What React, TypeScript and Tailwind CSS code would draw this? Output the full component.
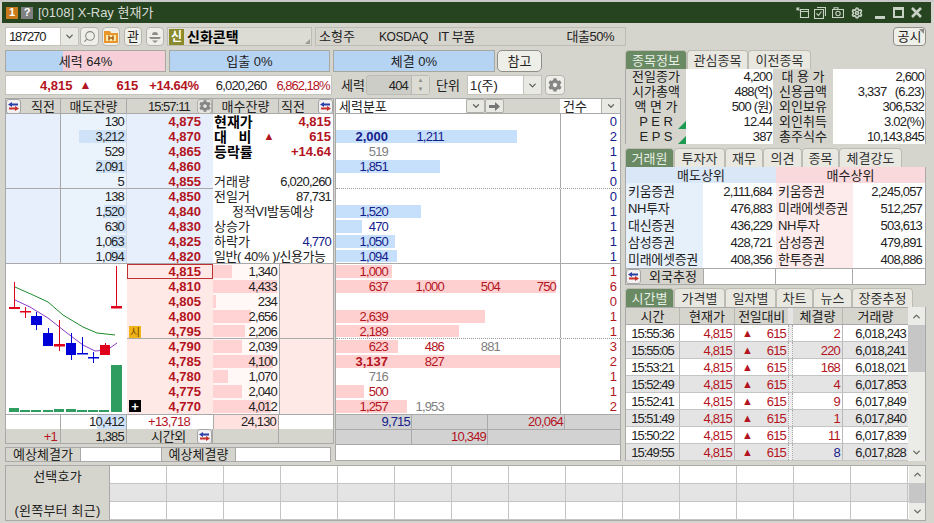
import { ChevronDown, ChevronUp, Search, Settings } from 'lucide-react'
import { FaCog } from 'react-icons/fa'
import type { ReactNode } from 'react'

const FONT = "font-['Liberation_Sans','Noto_Sans_CJK_KR',sans-serif]"
const RED = 'text-[#b3141e]'
const BLUE = 'text-[#14208c]'
const LINE = 'border-[#a9a9a9]'
const NUM = 'tracking-[-0.8px]'
const CLOCK = 'tracking-[-1px]'

type Ask = { qty: string; bar: number }

const ASKS: Ask[] = [
  { qty: '130', bar: 0 },
  { qty: '3,212', bar: 47 },
  { qty: '529', bar: 0 },
  { qty: '2,091', bar: 30 },
  { qty: '5', bar: 0 },
  { qty: '138', bar: 0 },
  { qty: '1,520', bar: 22 },
  { qty: '630', bar: 9 },
  { qty: '1,063', bar: 15 },
  { qty: '1,094', bar: 16 },
]
const ASK_PRICES = ['4,875', '4,870', '4,865', '4,860', '4,855', '4,850', '4,840', '4,830', '4,825', '4,820']

const BIDS = [
  { price: '4,815', qty: '1,340', bar: 19 },
  { price: '4,810', qty: '4,433', bar: 64 },
  { price: '4,805', qty: '234', bar: 3 },
  { price: '4,800', qty: '2,656', bar: 38 },
  { price: '4,795', qty: '2,206', bar: 32 },
  { price: '4,790', qty: '2,039', bar: 29 },
  { price: '4,785', qty: '4,100', bar: 60 },
  { price: '4,780', qty: '1,070', bar: 15 },
  { price: '4,775', qty: '2,040', bar: 29 },
  { price: '4,770', qty: '4,012', bar: 58 },
]

type Flow = { bar: number; v: [string, string][]; count: string }

const FLOWS: Flow[] = [
  { bar: 0, v: [], count: '0' },
  { bar: 181, v: [['2,000', 'b'], ['1,211', 'n']], count: '2' },
  { bar: 0, v: [['519', 'g']], count: '1' },
  { bar: 104, v: [['1,851', 'n']], count: '1' },
  { bar: 0, v: [], count: '0' },
  { bar: 0, v: [], count: '0' },
  { bar: 85, v: [['1,520', 'n']], count: '1' },
  { bar: 26, v: [['470', 'n']], count: '1' },
  { bar: 59, v: [['1,050', 'n']], count: '1' },
  { bar: 61, v: [['1,094', 'n']], count: '1' },
  { bar: 56, v: [['1,000', 'n']], count: '1' },
  { bar: 220, v: [['637', 'n'], ['1,000', 'n'], ['504', 'n'], ['750', 'n']], count: '6' },
  { bar: 0, v: [], count: '0' },
  { bar: 149, v: [['2,639', 'n']], count: '1' },
  { bar: 123, v: [['2,189', 'n']], count: '1' },
  { bar: 62, v: [['623', 'n'], ['486', 'n'], ['881', 'g']], count: '3' },
  { bar: 224, v: [['3,137', 'b'], ['827', 'n']], count: '2' },
  { bar: 0, v: [['716', 'g']], count: '1' },
  { bar: 28, v: [['500', 'n']], count: '1' },
  { bar: 71, v: [['1,257', 'n'], ['1,953', 'g']], count: '2' },
]

const BROKERS = [
  ['키움증권', '2,111,684', '키움증권', '2,245,057'],
  ['NH투자', '476,883', '미래에셋증권', '512,257'],
  ['대신증권', '436,229', 'NH투자', '503,613'],
  ['삼성증권', '428,721', '삼성증권', '479,891'],
  ['미래에셋증권', '408,356', '한투증권', '408,886'],
]

const TICKS = [
  ['15:55:36', '2', '6,018,243', 'r'],
  ['15:55:05', '220', '6,018,241', 'r'],
  ['15:53:21', '168', '6,018,021', 'r'],
  ['15:52:49', '4', '6,017,853', 'r'],
  ['15:52:41', '9', '6,017,849', 'r'],
  ['15:51:49', '1', '6,017,840', 'r'],
  ['15:50:22', '11', '6,017,839', 'r'],
  ['15:49:55', '8', '6,017,828', 'b'],
]

const STOCK_INFO = [
  ['전일종가', '4,200', '대 용 가', '2,600'],
  ['시가총액', '488(억)', '신용금액', '3,337   (6.23)'],
  ['액 면 가', '500 (원)', '외인보유', '306,532'],
  ['P E R', '12.44', '외인취득', '3.02(%)'],
  ['E P S', '387', '총주식수', '10,143,845'],
]

function Swap() {
  return (
    <span className="flex h-[15px] w-[15px] shrink-0 items-center justify-center rounded-[3px] border border-[#a5a5a5] bg-[#f2f2f2]">
      <svg width="13" height="11" viewBox="0 0 13 11">
        <path d="M5 1 1 3.5 5 6V4.5h6v-2H5z" fill="#2c3fa8" />
        <path d="M8 5l4 2.5L8 10V8.5H2v-2h6z" fill="#c8322c" />
      </svg>
    </span>
  )
}

function IconBtn({ children, className = '' }: { children: ReactNode; className?: string }) {
  return (
    <span className={`flex h-[19px] shrink-0 items-center justify-center rounded-[4px] border border-[#b5b5ad] bg-[#efefe9] ${className}`}>
      {children}
    </span>
  )
}

function Gear() {
  return (
    <span className="flex h-[15px] w-[15px] items-center justify-center rounded-[3px] border border-[#b0b0a8] bg-[#e4e4de]">
      <FaCog size={12} className="text-[#868686]" />
    </span>
  )
}

function TitleBar() {
  return (
    <div className="flex h-[21px] items-center bg-[#274421] pl-[4px] pr-[9px]">
      <span className="flex h-[12px] w-[12px] items-center justify-center bg-[#c97a1c] text-[11px] font-bold text-white">1</span>
      <span className="ml-[3px] flex h-[12px] w-[12px] items-center justify-center bg-[#808080] text-[11px] font-bold text-white">?</span>
      <span className="ml-[5px] text-[13px] text-[#d8dcd6]">[0108] X-Ray 현재가</span>
      <div className="ml-auto flex items-center">
        <svg width="13" height="11" viewBox="0 0 13 11" fill="none" stroke="#c8d2c4" strokeWidth="1.1">
          <path d="M4.5 2.5h8v8h-8zM4.5 4.5h8" />
          <path d="M1 1l2.5 2.5M.5 1h3M1 .5v3" />
        </svg>
        <svg className="ml-[5px]" width="12" height="12" viewBox="0 0 12 12" fill="none" stroke="#c8d2c4" strokeWidth="1.1">
          <path d="M3 .5h8.5V9M.5 2.5h9v9h-9z" />
          <path d="M2.5 6.5l2 2 3-4" />
        </svg>
        <svg className="ml-[6px]" width="12" height="11" viewBox="0 0 12 11" fill="none" stroke="#c8d2c4" strokeWidth="1.1">
          <path d="M.5 2.5h11v8H.5zM2 2.5V.8h4v1.7" />
          <circle cx="6" cy="6.5" r="2.2" />
        </svg>
        <Settings size={12} strokeWidth={3.2} className="ml-[7px] text-[#c8d2c4]" />
        <span className="ml-[12px] mt-[9px] h-[3px] w-[10px] bg-[#c8d2c4]" />
        <span className="ml-[8px] h-[11px] w-[11px] border-2 border-t-[3px] border-[#c8d2c4]" />
        <svg className="ml-[7px]" width="11" height="11" viewBox="0 0 11 11" stroke="#c8d2c4" strokeWidth="2.6">
          <path d="M1 1l9 9M10 1 1 10" />
        </svg>
      </div>
    </div>
  )
}

function Toolbar() {
  return (
    <div className="flex h-[19px] items-stretch">
      <div className="flex w-[56px] items-center border border-[#c4c4bc] bg-white pl-[3px] tracking-[-1.2px]">187270</div>
      <span className="flex w-[18px] items-center justify-center border-y border-r border-[#c4c4bc] bg-[#e9e9e3]">
        <ChevronDown size={11} strokeWidth={2.5} className="text-[#555]" />
      </span>
      <IconBtn className="ml-[1px] w-[19px]">
        <Search size={13} strokeWidth={2} className="-scale-x-100 text-[#8a8a82]" />
      </IconBtn>
      <IconBtn className="ml-[3px] w-[18px]">
        <svg width="14" height="13" viewBox="0 0 14 13">
          <path d="M0 1h6l1 2h7v10H0z" fill="#e9952a" />
          <path d="M2 5h10v6H2z" fill="#fbe9a8" />
          <path d="M5 5.5v5M9 5.5v5M5 8h4" stroke="#a85a12" strokeWidth="1.4" />
        </svg>
      </IconBtn>
      <IconBtn className="ml-[4px] w-[18px]">관</IconBtn>
      <IconBtn className="ml-[4px] w-[18px]">
        <svg width="14" height="14" viewBox="0 0 14 14" fill="#8d8d85">
          <path d="M4 5a3 3 0 0 1 6 0z" />
          <path d="M1 7h12l-1.5 2h-9z" />
          <path d="M4 10.5h6L7 13z" />
        </svg>
      </IconBtn>
      <div className="relative ml-[3px] flex w-[145px] items-center border border-[#bcbcb4] bg-[#dcdcd4] pl-[1px]">
        <span className="flex h-[16px] w-[15px] items-center justify-center bg-[#8a8a2a] text-[12px] font-bold text-white">신</span>
        <span className="ml-[3px] text-[14px] font-bold text-black">신화콘택</span>
        <svg className="absolute bottom-[1px] right-[1px]" width="5" height="5" viewBox="0 0 5 5"><path d="M5 0v5H0z" fill="#9a9a92" /></svg>
      </div>
      <div className="ml-[3px] flex w-[311px] items-center border border-[#bcbcb4] pl-[3px]">
        <span className="w-[60px]">소형주</span>
        <span className="w-[59px] text-[12px] tracking-[-0.4px]">KOSDAQ</span>
        <span className="tracking-[-0.4px]">IT 부품</span>
        <span className="ml-auto pr-[11px] tracking-[-0.5px]">대출50%</span>
      </div>
      <span className="relative ml-auto mr-[3px] flex w-[33px] items-center justify-center rounded-[4px] border border-[#8f8f87] bg-[#efefe9]">
        공시
        <svg className="absolute right-[1px] top-[1px]" width="5" height="5" viewBox="0 0 5 5"><path d="M0 0h5v5z" fill="#8a8a82" /></svg>
      </span>
    </div>
  )
}

function Meters() {
  return (
    <div className="flex h-[22px] items-stretch">
      <div className="flex w-[161px] items-center justify-center border border-[#a8a8a0] bg-[linear-gradient(90deg,#b5d3f2_36%,#f6cfd8_36%)]">세력 64%</div>
      <div className="ml-[3px] flex w-[161px] items-center justify-center border border-[#a8a8a0] bg-[#b5d3f2]">입출 0%</div>
      <div className="ml-[3px] flex w-[162px] items-center justify-center border border-[#a8a8a0] bg-[#b5d3f2]">체결 0%</div>
      <span className="ml-[2px] flex w-[45px] items-center justify-center rounded-[5px] border border-[#8f8f87] bg-[#efefe9]">참고</span>
    </div>
  )
}

function Quote() {
  return (
    <div className="flex h-[20px] items-stretch">
      <div className="flex w-[327px] items-center overflow-hidden whitespace-nowrap border border-[#c4c4bc] bg-white font-bold">
        <span className={`ml-[34px] ${RED}`}>4,815</span>
        <span className={`ml-[7px] text-[12px] ${RED}`}>▲</span>
        <span className={`ml-[25px] ${RED}`}>615</span>
        <span className={`ml-[11px] tracking-[-0.3px] ${RED}`}>+14.64%</span>
        <span className={`ml-[17px] font-normal text-[#222] ${NUM}`}>6,020,260</span>
        <span className={`ml-[10px] font-normal tracking-[-1px] ${RED}`}>6,862,18%</span>
      </div>
      <span className="ml-[9px] flex w-[25px] items-center whitespace-nowrap">세력</span>
      <div className="flex w-[64px] items-stretch rounded-[3px] border border-[#bcbcb4] bg-[#cdcdc7]">
        <span className={`flex flex-1 items-center justify-end pr-[3px] ${NUM}`}>404</span>
        <span className="flex w-[18px] flex-col items-center justify-center gap-[2px] border-l border-[#b8b8b0] bg-[#dcdcd4] text-[6px] leading-[7px] text-[#8d8d85]">
          <span>▲</span>
          <span>▼</span>
        </span>
      </div>
      <span className="ml-[6px] flex w-[26px] items-center whitespace-nowrap">단위</span>
      <div className="ml-[5px] flex w-[75px] items-stretch border border-[#c4c4bc] bg-white">
        <span className="flex flex-1 items-center pl-[2px]">1(주)</span>
        <span className="flex w-[18px] items-center justify-center border-l border-[#c4c4bc] bg-[#e9e9e3]">
          <ChevronDown size={11} strokeWidth={2.5} className="text-[#555]" />
        </span>
      </div>
      <IconBtn className="ml-[3px] !h-[20px] w-[20px]">
        <FaCog size={14} className="text-[#868686]" />
      </IconBtn>
    </div>
  )
}

function BookHeader() {
  return (
    <div className={`flex h-[16px] items-stretch border-y bg-[#d6d5cd] ${LINE}`}>
      <div className={`flex w-[55px] items-center border-r ${LINE}`}>
        <Swap />
        <span className="ml-[10px] whitespace-nowrap">직전</span>
      </div>
      <div className={`flex w-[66px] items-center justify-center whitespace-nowrap border-r ${LINE}`}>매도잔량</div>
      <div className={`flex w-[86px] items-center border-r ${LINE}`}>
        <span className={`ml-[21px] ${CLOCK}`}>15:57:11</span>
        <span className="ml-auto"><Gear /></span>
      </div>
      <div className={`flex w-[66px] items-center justify-center whitespace-nowrap border-r ${LINE}`}>매수잔량</div>
      <div className="flex flex-1 items-center">
        <span className="ml-[2px] whitespace-nowrap">직전</span>
        <span className="ml-auto"><Swap /></span>
      </div>
    </div>
  )
}

function Bar({ width, color }: { width: number; color: string }) {
  return <span className={`absolute bottom-[1px] top-[1px] ${color}`} style={{ width }} />
}

function InfoCell({ i }: { i: number }) {
  const row = 'flex h-[15px] items-center bg-white pl-[1px] pr-[2px] whitespace-nowrap'
  const strong = 'text-[14px] font-bold text-black'
  const big = `text-[13px] ${RED}`
  if (i === 0) return <div className={`${row} justify-between ${strong}`}>현재가<span className={big}>4,815</span></div>
  if (i === 1) return <div className={`${row} whitespace-pre ${strong}`}>대   비<span className={`ml-[12px] text-[11px] ${RED}`}>▲</span><span className={`ml-auto ${big}`}>615</span></div>
  if (i === 2) return <div className={`${row} justify-between ${strong}`}>등락률<span className={big}>+14.64</span></div>
  if (i === 3) return <div className={row} />
  if (i === 4) return <div className={`${row} justify-between`}>거래량<span className={NUM}>6,020,260</span></div>
  if (i === 5) return <div className={`${row} justify-between`}>전일거<span className={NUM}>87,731</span></div>
  if (i === 6) return <div className={`${row} pl-[19px]`}><span className="tracking-[-0.3px]">정적VI발동예상</span></div>
  if (i === 7) return <div className={row}>상승가</div>
  if (i === 8) return <div className={`${row} justify-between`}>하락가<span className={`${NUM} ${BLUE}`}>4,770</span></div>
  return <div className={row}><span className="tracking-[-0.4px]">일반( 40% )/신용가능</span></div>
}

function Candles() {
  const blue = '#0000d8'
  const red = '#e0001c'
  const vols: [number, number][] = [[9, 4], [20, 2], [31, 2], [43, 2], [54, 3], [66, 3], [77, 2], [88, 2], [99, 2]]
  return (
    <svg width="121" height="150" viewBox="6 264 121 150" className="shrink-0 bg-white">
      <polyline points="15,287 33,295 48,302 63,315 83,327 97,333 115,335" fill="none" stroke="#1f8a2e" />
      <polyline points="15,300 30,307 48,318 67,333 83,345 95,351 107,350 117,343" fill="none" stroke="#8a3bc8" />
      <path d="M14.5 282v26M25.5 307v11M59.5 320v31M116.5 266v41M105.5 343v11" stroke={red} />
      <path d="M9 307h11v2H9zM20 311h11v1.5H20zM54 344h11v2.5H54zM111 306h11v2.5h-11z" fill={red} />
      <rect x="100" y="345" width="10" height="10" fill={red} />
      <path d="M36.5 312v18M48.5 328v6M71.5 333v27M82.5 337v17M93.5 352v11" stroke={blue} />
      <rect x="31" y="316" width="11" height="9" fill={blue} />
      <rect x="43" y="333" width="10" height="13" fill={blue} />
      <rect x="66" y="343" width="10" height="12" fill={blue} />
      <path d="M77 353h11v1.5H77zM88 357h11v1.5H88z" fill={blue} />
      {vols.map(([x, h]) => (
        <rect key={x} x={x} y={412 - h} width="10" height={h} fill="#2f9c60" />
      ))}
      <rect x="111" y="365" width="11" height="47" fill="#2f9c60" />
    </svg>
  )
}

function Book() {
  return (
    <div className={`w-[329px] shrink-0 border-x border-b ${LINE}`}>
      <BookHeader />
      <div>
        {ASKS.map((a, i) => {
          const under = i === 4 ? `border-b ${LINE}` : ''
          return (
            <div key={ASK_PRICES[i]} className={`flex h-[15px] items-stretch overflow-hidden ${i === 9 ? `border-b ${LINE}` : ''}`}>
              <div className={`w-[55px] border-r bg-[#e6effb] ${LINE} ${under}`} />
              <div className={`relative flex w-[66px] justify-end border-r border-r-[#cfd8e4] bg-[#eaf2fc] pr-[2px] ${under} ${LINE}`}>
                {a.bar > 0 && <span className="absolute bottom-[1px] right-0 top-[1px] bg-[#cfe2f8]" style={{ width: a.bar }} />}
                <span className={`relative leading-[15px] text-[#222] ${NUM}`}>{a.qty}</span>
              </div>
              <div className={`flex w-[86px] justify-end bg-[#e6effb] pr-[12px] font-bold leading-[15px] ${RED} ${under}`}>{ASK_PRICES[i]}</div>
              <div className="min-w-0 flex-1"><InfoCell i={i} /></div>
            </div>
          )
        })}
      </div>
      <div className="flex">
        <Candles />
        <div className="relative flex-1">
          {BIDS.map((b, i) => (
            <div key={b.price} className={`flex h-[15px] items-stretch ${i === 4 ? `border-b ${LINE}` : ''}`}>
              <div className={`flex w-[86px] justify-end pr-[12px] font-bold leading-[15px] ${RED} ${i === 0 ? 'border border-[#c03030] bg-[#ffe9e7]' : 'bg-[#ffe9e7]'}`}>
                <span className={i === 0 ? '-mt-px mr-[-1px]' : ''}>{b.price}</span>
              </div>
              <div className="relative flex w-[66px] justify-end bg-[#fff8f7] pr-[2px]">
                <Bar width={b.bar} color="left-0 bg-[#ffd3d3]" />
                <span className={`relative leading-[15px] text-[#222] ${NUM}`}>{b.qty}</span>
              </div>
              <div className={`flex-1 border-l bg-[#ffe9e7] ${LINE}`} />
            </div>
          ))}
          <span className="absolute left-[2px] top-[62px] flex h-[12px] w-[12px] items-center justify-center bg-[#f0b418] text-[11px] text-[#7a4a00]">시</span>
          <span className="absolute bottom-[2px] left-[2px] flex h-[12px] w-[12px] items-center justify-center bg-black text-[13px] font-bold leading-none text-white">+</span>
        </div>
      </div>
      <div className={`flex h-[15px] items-stretch border-t bg-white leading-[14px] ${LINE}`}>
        <div className={`w-[55px] border-r ${LINE}`} />
        <div className={`relative flex w-[66px] justify-end border-r pr-[2px] ${LINE}`}>
          <span className="absolute bottom-0 right-0 top-0 w-[29px] bg-[#cfe2f8]" />
          <span className={`relative ${NUM}`}>10,412</span>
        </div>
        <div className={`flex w-[86px] justify-center pr-[2px] ${NUM} ${RED}`}>+13,718</div>
        <div className={`flex w-[66px] justify-end border-x bg-[#ffe2e0] pr-[2px] ${NUM} ${LINE}`}>24,130</div>
        <div className="flex-1" />
      </div>
      <div className="flex h-[14px] items-center bg-[#d6d5cd]">
        <div className={`flex h-full w-[55px] items-center justify-end border-r pr-[3px] ${NUM} ${RED} ${LINE}`}>+1</div>
        <div className={`flex h-full w-[66px] items-center justify-end border-r pr-[2px] ${NUM} ${LINE}`}>1,385</div>
        <div className={`flex h-full w-[86px] items-center border-r ${LINE}`}>
          <span className="ml-[24px] whitespace-nowrap tracking-[-0.3px]">시간외</span>
          <span className="ml-auto"><Swap /></span>
        </div>
        <div className={`h-full w-[66px] border-r ${LINE}`} />
      </div>
    </div>
  )
}

function Flows() {
  return (
    <div className={`ml-[1px] flex w-[286px] flex-col border-x border-b ${LINE}`}>
      <div className={`flex h-[16px] items-stretch border-y bg-[#d6d5cd] ${LINE}`}>
        <div className="flex w-[130px] items-center bg-white pl-[3px]">세력분포</div>
        <span className="flex w-[19px] items-center justify-center rounded-[2px] border border-[#b0b0a8] bg-[#e9e9e3]">
          <ChevronDown size={10} strokeWidth={3} className="text-[#666]" />
        </span>
        <span className="flex w-[19px] items-center justify-center rounded-[2px] border border-[#b0b0a8] bg-[#e9e9e3]">
          <svg width="11" height="9" viewBox="0 0 11 9"><path d="M0 3h6V0l5 4.5L6 9V6H0z" fill="#777" /></svg>
        </span>
        <span className="flex-1" />
        <div className="flex w-[41px] items-center bg-white pl-[3px]">건수</div>
        <span className="flex w-[19px] items-center justify-center border-l border-[#b0b0a8] bg-[#e9e9e3]">
          <ChevronDown size={10} strokeWidth={3} className="text-[#666]" />
        </span>
      </div>
      {FLOWS.map((f, i) => (
        <div
          key={i}
          className={`flex h-[15px] items-stretch bg-white ${i === 4 || i === 14 ? 'border-b border-dotted border-[#999]' : i === 9 ? 'border-b border-[#a9a9a9]' : ''}`}
        >
          <div className={`relative flex w-[225px] border-r ${LINE}`}>
            {f.bar > 0 && <Bar width={f.bar} color={i < 10 ? 'left-0 bg-[#c6dffa]' : 'left-0 bg-[#ffd0d0]'} />}
            {f.v.map(([text, kind], j) => (
              <span
                key={j}
                className={`relative ${j === 0 ? 'w-[52px]' : 'w-[56px]'} shrink-0 text-right leading-[15px] ${kind === 'g' ? 'text-[#808080]' : i < 10 ? BLUE : RED} ${kind === 'b' ? 'font-bold' : NUM}`}
              >
                {text}
              </span>
            ))}
          </div>
          <div className={`flex-1 pr-[3px] text-right leading-[15px] ${i < 10 ? BLUE : RED}`}>{f.count}</div>
        </div>
      ))}
      <div className={`flex h-[15px] items-stretch border-t bg-[#d2d2d2] ${NUM} ${LINE}`}>
        <div className={`w-[76px] border-r pr-[1px] text-right leading-[14px] ${LINE} ${BLUE}`}>9,715</div>
        <div className={`w-[76px] border-r ${LINE}`} />
        <div className={`w-[77px] border-r pr-[1px] text-right leading-[14px] ${LINE} ${RED}`}>20,064</div>
        <div className="flex-1" />
      </div>
      <div className={`flex h-[15px] items-stretch border-t bg-[#d2d2d2] ${NUM} ${LINE}`}>
        <div className={`w-[76px] border-r ${LINE}`} />
        <div className={`w-[76px] border-r pr-[1px] text-right leading-[14px] ${LINE} ${RED}`}>10,349</div>
        <div className="flex-1" />
      </div>
      <div className={`flex-1 border-t bg-white ${LINE}`} />
    </div>
  )
}

function Tabs({ items, widths }: { items: string[]; widths: string[] }) {
  return (
    <div className="flex h-[19px] items-stretch">
      {items.map((t, i) => (
        <span
          key={t}
          className={`flex ${widths[i]} items-center justify-center whitespace-nowrap rounded-t-[4px] border border-b-0 border-[#bcbcb4] ${i === 0 ? 'bg-[#698a63] text-[#e8efe6]' : 'bg-[#e8e8e0] text-[#333]'}`}
        >
          {t}
        </span>
      ))}
    </div>
  )
}

function Scrollbar({ thumb, arrow }: { thumb: string; arrow: string }) {
  return (
    <div className="flex flex-1 flex-col items-stretch bg-[#ebebe7]">
      <span className={`flex ${arrow} items-center justify-center`}>
        <ChevronUp size={11} strokeWidth={3} className="text-[#666]" />
      </span>
      <span className={`${thumb} bg-[#c6c6c6]`} />
      <span className={`mt-auto flex ${arrow} items-center justify-center`}>
        <ChevronDown size={11} strokeWidth={3} className="text-[#666]" />
      </span>
    </div>
  )
}

function RightPanel() {
  return (
    <div className="ml-[4px] flex w-[301px] flex-col">
      <Tabs items={['종목정보', '관심종목', '이전종목']} widths={['w-[62px]', 'w-[61px]', 'w-[63px]']} />
      <div className="w-full border-x border-[#a9a9a9]">
        {STOCK_INFO.map((r, i) => (
          <div key={r[0]} className="flex h-[15px] items-stretch">
            <div className="relative flex w-[60px] items-center justify-center whitespace-pre">
              {r[0]}
              {i >= 3 && (
                <svg className="absolute bottom-0 right-0" width="8" height="8" viewBox="0 0 8 8"><path d="M8 0v8H0z" fill="#1f9a52" /></svg>
              )}
            </div>
            <div className={`flex w-[87px] items-center justify-end bg-white pr-[1px] ${NUM}`}>{r[1]}</div>
            <div className="flex w-[60px] items-center justify-center whitespace-pre">{r[2]}</div>
            <div className={`flex flex-1 items-center justify-end whitespace-pre bg-white pr-[1px] ${NUM}`}>{r[3]}</div>
          </div>
        ))}
      </div>
      <div className="mt-[4px]">
        <Tabs items={['거래원', '투자자', '재무', '의견', '종목', '체결강도']} widths={['w-[49px]', 'w-[51px]', 'w-[38px]', 'w-[39px]', 'w-[37px]', 'w-[63px]']} />
      </div>
      <div className="border-x border-b border-[#a9a9a9] bg-white">
        <div className="flex h-[16px]">
          <div className="flex w-[150px] items-center justify-center bg-[#d9e7f6]">매도상위</div>
          <div className="flex flex-1 items-center justify-center bg-[#fad9dc]">매수상위</div>
        </div>
        {BROKERS.map(r => (
          <div key={r[0]} className="flex h-[17px] items-stretch">
            <div className="flex w-[77px] items-center whitespace-nowrap bg-[#e6f0fb] pl-[2px] tracking-[-0.3px]">{r[0]}</div>
            <div className={`flex w-[73px] items-center justify-end pr-[4px] ${NUM}`}>{r[1]}</div>
            <div className="flex w-[77px] items-center whitespace-nowrap bg-[#fdeaea] pl-[2px] tracking-[-0.3px]">{r[2]}</div>
            <div className={`flex flex-1 items-center justify-end pr-[3px] ${NUM}`}>{r[3]}</div>
          </div>
        ))}
        <div className="flex h-[16px] items-stretch border-t border-[#a9a9a9]">
          <div className="flex w-[77px] items-center whitespace-nowrap bg-[#d6d5cd]">
            <Swap />
            <span className="ml-[8px]">외국추정</span>
          </div>
          <div className="w-[73px] border-x border-[#a9a9a9]" />
          <div className="w-[77px] border-r border-[#a9a9a9]" />
        </div>
      </div>
      <div className="mt-[3px]">
        <Tabs items={['시간별', '가격별', '일자별', '차트', '뉴스', '장중추정']} widths={['w-[49px]', 'w-[51px]', 'w-[51px]', 'w-[37px]', 'w-[39px]', 'w-[61px]']} />
      </div>
      <div className="flex border-x border-[#a9a9a9] bg-[#efefef]">
        <div className="w-[282px] shrink-0">
          <div className="flex h-[18px] items-stretch border-y border-[#a9a9a9] bg-[#d6d5cd] whitespace-nowrap">
            <div className="flex w-[54px] items-center justify-center border-r border-[#b8b8b0]">시간</div>
            <div className="flex w-[55px] items-center justify-center border-r border-[#b8b8b0]">현재가</div>
            <div className="flex w-[53px] items-center justify-center tracking-[-0.3px]">전일대비</div>
            <div className="w-[5px] bg-[#e4e4e4]" />
            <div className="flex w-[50px] items-center justify-center border-r border-[#b8b8b0]">체결량</div>
            <div className="flex flex-1 items-center justify-center">거래량</div>
          </div>
          {TICKS.map((t, i) => (
            <div key={t[0]} className={`flex h-[17px] items-stretch border-b border-[#c4c4c4] ${i % 2 ? 'bg-[#e4e4e4]' : 'bg-white'}`}>
              <div className={`flex w-[54px] items-center justify-center border-r border-[#b8b8b8] ${CLOCK}`}>{t[0]}</div>
              <div className={`flex w-[55px] items-center justify-end border-r border-[#b8b8b8] pr-[2px] ${NUM} ${RED}`}>4,815</div>
              <div className={`flex w-[53px] items-center pl-[7px] pr-[2px] ${NUM} ${RED}`}>
                <span className="text-[11px]">▲</span>
                <span className="ml-auto">615</span>
              </div>
              <div className="w-[5px] border-x border-dotted border-[#aaa] bg-[#eee]" />
              <div className={`flex w-[50px] items-center justify-end border-r border-[#b8b8b8] pr-[2px] ${NUM} ${t[3] === 'b' ? BLUE : RED}`}>{t[1]}</div>
              <div className={`flex flex-1 items-center justify-end pr-[2px] ${NUM}`}>{t[2]}</div>
            </div>
          ))}
        </div>
        <Scrollbar thumb="h-[47px]" arrow="h-[18px]" />
      </div>
    </div>
  )
}

function Expected() {
  return (
    <div className="mt-[3px] flex h-[15px] w-[326px] items-stretch whitespace-nowrap border border-[#a9a9a9]">
      <span className="flex w-[75px] items-center justify-center border-r border-[#a9a9a9]">예상체결가</span>
      <span className="w-[80px] bg-white" />
      <span className="flex w-[75px] items-center justify-center border-x border-[#a9a9a9]">예상체결량</span>
      <span className="flex-1 bg-white" />
    </div>
  )
}

function History() {
  const cols = Array.from({ length: 14 })
  return (
    <div className="mt-[4px] flex h-[56px] w-[921px] items-stretch border border-[#a9a9a9]">
      <div className="flex w-[104px] flex-col items-center justify-between whitespace-nowrap border-r border-[#a9a9a9] pb-[3px] pt-[4px] tracking-[0.2px]">
        <span>선택호가</span>
        <span>(왼쪽부터 최근)</span>
      </div>
      <div className="w-[799px] shrink-0 overflow-hidden">
        {[0, 1, 2].map(r => (
          <div key={r} className={`flex h-[18px] border-b border-[#c4c4c4] ${r === 1 ? 'bg-[#e4e4e4]' : 'bg-white'}`}>
            {cols.map((_, c) => (
              <span key={c} className="w-[57px] shrink-0 border-r border-[#c4c4c4]" />
            ))}
          </div>
        ))}
      </div>
      <Scrollbar thumb="h-[20px]" arrow="h-[17px]" />
    </div>
  )
}

export default function App() {
  return (
    <div className={`h-[523px] w-[934px] overflow-hidden bg-[#d6d5cd] text-[13px] leading-none text-[#222] ${FONT}`}>
      <div className="h-[2px] bg-[#c9c9c9]" />
      <div className="ml-[2px] mr-[3px]"><TitleBar /></div>
      <div className="px-[5px] pt-[4px]">
        <Toolbar />
        <div className="mt-[4px] flex h-[411px] items-start">
          <div className="w-[616px] shrink-0">
            <Meters />
            <div className="mt-[3px]"><Quote /></div>
            <div className="mt-[3px] flex h-[363px] items-stretch">
              <div className="flex flex-col">
                <div className="h-[346px] w-[329px]"><Book /></div>
                <Expected />
              </div>
              <Flows />
            </div>
          </div>
          <RightPanel />
        </div>
        <History />
      </div>
    </div>
  )
}
